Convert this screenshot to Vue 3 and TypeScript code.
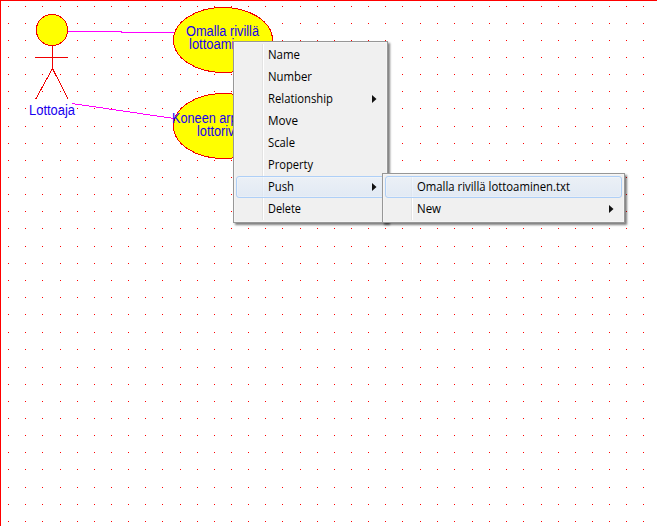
<script setup lang="ts">
interface MenuItem {
  label: string
  width: number
  submenu?: boolean
  active?: boolean
}

const columns: number[] = [
  8, 25, 42, 60, 77, 94, 111, 128, 145, 162, 180, 197, 214, 231, 248, 265, 282, 300, 317, 334,
  351, 368, 385, 402, 420, 437, 454, 472, 489, 506, 523, 541, 558, 575, 592, 609, 626, 643,
]
const rows: number[] = [
  6, 23, 40, 57, 74, 91, 108, 126, 143, 160, 177, 194, 211, 228, 246, 263, 280, 297, 314, 332,
  349, 367, 384, 401, 418, 435, 452, 469, 487, 504, 521,
]
const gridPath = rows.map((y) => columns.map((x) => `M${x} ${y}h1v1h-1z`).join('')).join('')

const captions = [
  { text: 'Lottoaja', x: 29, y: 115, width: 46 },
  { text: 'Omalla rivillä', x: 186, y: 36, width: 73 },
  { text: 'lottoaminen', x: 189, y: 49, width: 67 },
  { text: 'Koneen arpomalla', x: 172, y: 123, width: 103 },
  { text: 'lottorivillä', x: 197, y: 136, width: 53 },
]

const contextItems: MenuItem[] = [
  { label: 'Name', width: 32 },
  { label: 'Number', width: 44 },
  { label: 'Relationship', width: 65, submenu: true },
  { label: 'Move', width: 30 },
  { label: 'Scale', width: 27 },
  { label: 'Property', width: 45 },
  { label: 'Push', width: 26, submenu: true, active: true },
  { label: 'Delete', width: 33 },
]
const pushItems: MenuItem[] = [
  { label: 'Omalla rivillä lottoaminen.txt', width: 153, active: true },
  { label: 'New', width: 24, submenu: true },
]
const menus = [
  { name: 'context', items: contextItems },
  { name: 'push', items: pushItems },
]
</script>

<template>
  <main class="canvas">
    <svg class="diagram" width="657" height="526" viewBox="0 0 657 526">
      <path class="grid" :d="gridPath" />
      <path class="frame" d="M0 0H657V1H1V526H0Z" />
      <g class="shape">
        <ellipse cx="52" cy="30" rx="15.7" ry="15.5" />
        <path d="M52.5 45.5V68.5L35.5 99.5M52.5 68.5L68 99M35 57.5H68" />
        <ellipse cx="223" cy="40" rx="49.5" ry="32.5" />
        <ellipse cx="223" cy="126" rx="49.5" ry="32.5" />
      </g>
      <path class="link" d="M68 31.5H121V32.5H174M72 103.5L174 118.5" />
      <g class="caption">
        <text
          v-for="caption in captions"
          :key="caption.text"
          :x="caption.x"
          :y="caption.y"
          :textLength="caption.width"
          lengthAdjust="spacingAndGlyphs"
        >{{ caption.text }}</text>
      </g>
    </svg>

    <div v-for="menu in menus" :key="menu.name" class="menu" :class="menu.name">
      <div
        v-for="item in menu.items"
        :key="item.label"
        class="item"
        :class="{ active: item.active }"
      >
        <svg class="label" height="20" :width="item.width + 2">
          <text x="0" y="14" :textLength="item.width" lengthAdjust="spacingAndGlyphs">{{ item.label }}</text>
        </svg>
        <svg v-if="item.submenu" class="arrow" width="5" height="8" viewBox="0 0 5 8">
          <path d="M0 0L4.5 4L0 8Z" />
        </svg>
      </div>
    </div>
  </main>
</template>

<style>
body {
  margin: 0;
  overflow: hidden;
}
</style>

<style scoped>
.canvas {
  position: relative;
  width: 657px;
  height: 526px;
  overflow: hidden;
  background: #fff;
}
.diagram {
  display: block;
}
.grid,
.frame {
  fill: #f00;
  shape-rendering: crispEdges;
}
.shape {
  fill: none;
  stroke: #f00000;
  stroke-width: 1;
  shape-rendering: crispEdges;
}
.shape ellipse {
  fill: #ff0;
}
.link {
  fill: none;
  stroke: #f0f;
  shape-rendering: crispEdges;
}
.caption {
  fill: #1800f0;
  font: 14px 'Liberation Sans', Arial, sans-serif;
}
.menu {
  position: absolute;
  box-sizing: border-box;
  padding: 2px;
  border: 1px solid #979797;
  background: linear-gradient(90deg, #e3e3e3 0 1px, #fff 1px 2px, transparent 2px) 28px 2px / 2px
      calc(100% - 4px) no-repeat #f0f0f0;
  box-shadow:
    inset 0 0 0 1px #f5f5f5,
    2px 2px 2px rgba(0, 0, 0, 0.5);
}
.context {
  left: 233px;
  top: 41px;
  width: 155px;
}
.push {
  left: 382px;
  top: 173px;
  width: 243px;
}
.item {
  display: flex;
  align-items: center;
  justify-content: space-between;
  box-sizing: border-box;
  height: 22px;
  padding: 0 7px 0 31px;
  border: 1px solid transparent;
  border-radius: 3px;
}
.item.active {
  border-color: #aecff7;
  background: linear-gradient(rgba(232, 240, 250, 0.6), rgba(218, 230, 246, 0.65));
  box-shadow: inset 0 0 0 1px rgba(255, 255, 255, 0.25);
}
.label {
  display: block;
  overflow: visible;
  font: 12px 'Open Sans', 'Noto Sans', sans-serif;
  fill: #000;
}
.arrow {
  display: block;
  fill: #111;
}
</style>
